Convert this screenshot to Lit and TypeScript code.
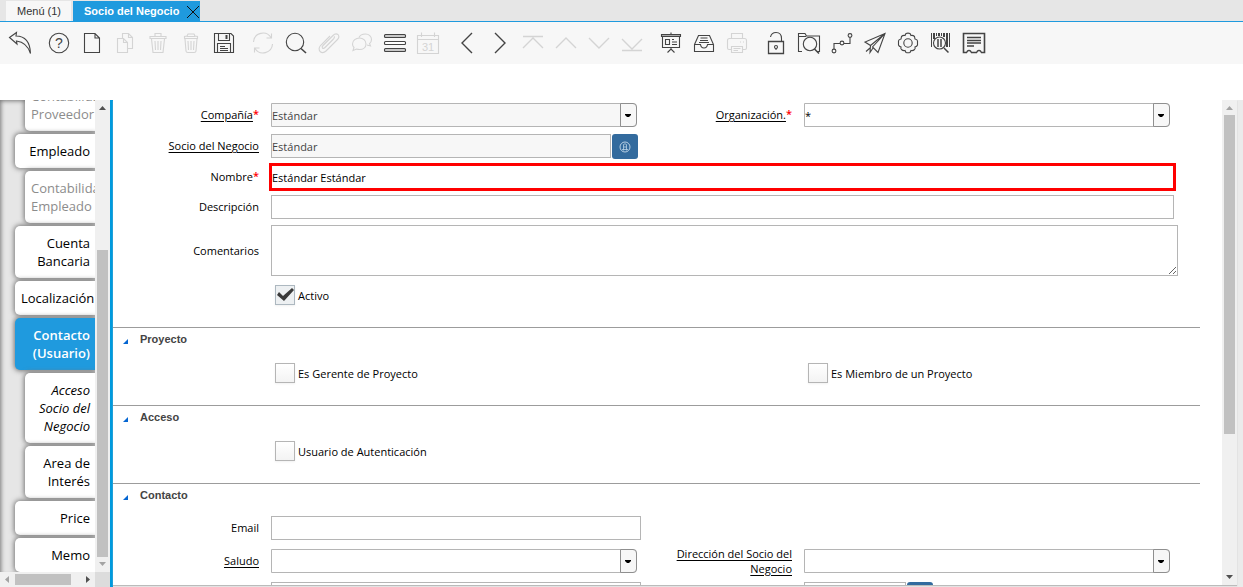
import { LitElement, html, svg, css, nothing, TemplateResult } from "lit";
import { customElement, property } from "lit/decorators.js";
import { classMap } from "lit/directives/class-map.js";

interface Tool {
  name: string;
  icon: TemplateResult;
  off?: boolean;
}

interface Tab {
  text: string;
  level?: number;
  state?: "active" | "disabled" | "readonly";
}

const toolGroups: Tool[][] = [
  [
    {
      name: "Deshacer",
      icon: svg`<path d="M1.500 6.500 8.500 1.500 8 5C16 5 22 10 22.500 22.500 20 14.500 16 11 8.500 10L9 13Z"/>`,
    },
  ],
  [
    {
      name: "Ayuda",
      icon: svg`<circle cx="12" cy="12" r="9.700"/><text x="12" y="17" font-size="14" text-anchor="middle">?</text>`,
    },
    { name: "Nuevo", icon: svg`<path d="M4.500 2.500H15L19.500 7V21.500H4.500ZM15 2.500V7H19.500"/>` },
    {
      name: "Copiar",
      off: true,
      icon: svg`<path d="M4.500 7.500H10.500L14.500 11.500V21.500H4.500ZM10.500 7.500V11.500H14.500M9.500 7.500V2.500H15.500L19.500 6.500V17.500H14.500M15.500 2.500V6.500H19.500"/>`,
    },
    {
      name: "Borrar",
      off: true,
      icon: svg`<path d="M4 5.500H20V7.500H4ZM9 5V2.500H15V5M5.500 8 7 21.500H17L18.500 8M9 10 9.500 19M12 10V19M15 10 14.500 19"/>`,
    },
    {
      name: "Borrar varios",
      off: true,
      icon: svg`<path d="M5 7.500H19M5.500 7.500V5.500L8 5 9 3H15L16 5 18.500 5.500V7.500M6 8 7 20Q7 21.500 9 21.500H15Q17 21.500 17 20L18 8M9 10 9.500 19M12 10V19M15 10 14.500 19M8 5.500H16"/>`,
    },
    {
      name: "Guardar",
      icon: svg`<path d="M2.500 2.500H19L21.500 5V21.500H2.500ZM6.500 2.500V9.500H17.500V2.500M5.500 21.500V12.500H18.500V21.500"/><path d="M14.500 4V8" stroke-width="2"/><path d="M8 15.500H13M8 17.500H16M8 19.500H16"/>`,
    },
  ],
  [
    {
      name: "Refrescar",
      off: true,
      icon: svg`<path d="M2.500 11A9.500 9.500 0 0 1 20 6.500M20.500 2.500V7H15.500M21.500 13A9.500 9.500 0 0 1 4 17.500M3.500 21.500V17H8.500"/>`,
    },
    { name: "Buscar", icon: svg`<circle cx="11" cy="11" r="8.700"/><path d="M17 17.500 22 22" stroke-width="1.600"/>` },
    {
      name: "Adjuntar",
      off: true,
      icon: svg`<path d="M16.500 8 8 16.500Q6.500 18 5.500 17 4.500 16 6 14.500L16 4.500Q18.500 2 21 3.500 23 6 20.500 8.500L9 20Q6 23 3 20.500 1 17.500 3.500 14.500L13 5"/><path d="M16.500 8Q18 6 17 5.500"/>`,
    },
    {
      name: "Conversación",
      off: true,
      icon: svg`<path d="M9.500 7C13 7 16 9.500 16 13S13 18.500 9.500 18.500Q8 18.500 6.500 18L3 19.500 4 16.500Q2.500 15 2.500 13C2.500 9.500 6 7 9.500 7Z"/><path d="M9 6.500C10 4 12.500 3 15.500 3 19 3 21.500 5.500 21.500 8.500Q21.500 11 19.500 12.500L20.500 15 17 14"/>`,
    },
    {
      name: "Vista de lista",
      icon: svg`<rect x="1.500" y="3.500" width="21" height="3" rx="1" fill="#c8c8c8"/><rect x="1.500" y="10.500" width="21" height="3" rx="1" fill="#fff"/><rect x="1.500" y="17.500" width="21" height="3" rx="1" fill="#c8c8c8"/>`,
    },
    {
      name: "Historial",
      off: true,
      icon: svg`<path d="M1.500 4.500H22.500V22.500H1.500ZM1.500 8.500H22.500M5.500 1.500V6M18.500 1.500V6"/><text x="12" y="20" font-size="11" text-anchor="middle">31</text>`,
    },
  ],
  [
    { name: "Anterior", icon: svg`<path d="M17 2 7 12 17 22" stroke-width="1.400"/>` },
    { name: "Siguiente", icon: svg`<path d="M7 2 17 12 7 22" stroke-width="1.400"/>` },
    { name: "Primer registro", off: true, icon: svg`<path d="M2 5.500H22M2 17 12 7 22 17" stroke-width="1.400"/>` },
    { name: "Registro previo", off: true, icon: svg`<path d="M2 17 12 7 22 17" stroke-width="1.400"/>` },
    { name: "Registro próximo", off: true, icon: svg`<path d="M2 7 12 17 22 7" stroke-width="1.400"/>` },
    { name: "Último registro", off: true, icon: svg`<path d="M2 8 12 18 22 8M2 19.500H22" stroke-width="1.400"/>` },
  ],
  [
    {
      name: "Informe",
      icon: svg`<path d="M2.500 3.500H21.500V5.500H2.500Z" fill="#aaa"/><path d="M3.500 5V16.500H20.500V5M6.500 8.500H10.500V13.500H6.500ZM13 8.500H15M13 11H18M13 13.500H18M12 1.500V3M12 17V19M8.500 21.500 12 18 15.500 21.500"/>`,
    },
    {
      name: "Archivo",
      icon: svg`<path d="M2.500 13.500 6.500 4.500H17.500L21.500 13.500V20.500H2.500ZM2.500 13.500H8.500Q9 17 12 17T15.500 13.500H21.500M8.500 7H15.500M8 9.500H16M7 11.500H17"/>`,
    },
    {
      name: "Imprimir",
      off: true,
      icon: svg`<path d="M6.500 7.500V2.500H17.500V7.500M6 18.500H4Q2.500 18.500 2.500 17V9.500Q2.500 7.500 4.500 7.500H19.500Q21.500 7.500 21.500 9.500V17Q21.500 18.500 20 18.500H18M6.500 15.500H17.500V21.500H6.500ZM8.500 17.500H15.500M8.500 19.500H13M15 11H16M18 11H19"/>`,
    },
  ],
  [
    {
      name: "Bloquear",
      icon: svg`<path d="M4.500 10.500H19.500V22.500H4.500Z" stroke-width="1.300"/><path d="M6.500 6Q7.500 1.500 12 1.500 17.500 1.500 17.500 7.500V10"/><circle cx="12" cy="16" r="1.500"/><path d="M12 17V19"/>`,
    },
    {
      name: "Buscar en carpeta",
      icon: svg`<path d="M5 20.500H1.500V2.500H8L9.500 5H22.500V20.500H20M1.500 5.500H9"/><circle cx="13" cy="13" r="6.700"/><path d="M17.500 18 22 22.500" stroke-width="1.500"/>`,
    },
    {
      name: "Flujo de trabajo",
      icon: svg`<circle cx="4" cy="20" r="1.900"/><circle cx="12" cy="12" r="1.900"/><circle cx="20" cy="4.500" r="1.900"/><path d="M4 18V12.500H10M14 12.500H20V6.500"/>`,
    },
    {
      name: "Enviar",
      icon: svg`<path d="M22 2.500 2 11 7.500 14.500 22 2.500 9.500 16 15 21.500ZM7.500 14.500 7 21.500 10 17M7 17 3 20.500"/>`,
    },
    {
      name: "Proceso",
      icon: svg`<path d="M10 2.500Q12 1.800 14 2.500L15 4.500Q17 4 18.500 5.500L19 8Q21.500 8.500 21.500 10V14Q21 15.500 19 16 19.500 18 18.500 18.500 17 20 15 19.500L14 21.500Q12 22 10 21.500L9 19.500Q7 20 5.500 18.500 4.500 18 5 16 3 15.500 2.500 14V10Q2.500 8.500 5 8L5.500 5.500Q7 4 9 4.500Z"/><circle cx="12" cy="12" r="4.200"/>`,
    },
    {
      name: "Código de barras",
      icon: svg`<path d="M2.500 2V16M7.500 2V5M20.500 2V16M12.500 2V5" stroke-width="1"/><path d="M5 2V8M10 2V5M15 2V6M18 2V16" stroke-width="2"/><circle cx="10.500" cy="12" r="6" fill="#f7f7f7"/><path d="M9 8V16M12 8V16" stroke-width="1.500"/><path d="M15 17 19.500 21.500" stroke-width="1.500"/>`,
    },
    {
      name: "Ticket",
      icon: svg`<path d="M5 21.500H1.500V2.500H22.500V21.500H19M9 21.500H15" stroke-width="1.600"/><path d="M5 21.500Q5 19.500 7 19.500T9 21.500M15 21.500Q15 19.500 17 19.500T19 21.500M5 6.500H19M5 9.500H19M5 12H19M5 15H12" stroke-width="1.300"/>`,
    },
  ],
];

const sideTabs: Tab[] = [
  { text: "Contabilidad Proveedor", level: 1, state: "disabled" },
  { text: "Empleado" },
  { text: "Contabilidad Empleado", level: 1, state: "disabled" },
  { text: "Cuenta Bancaria" },
  { text: "Localización" },
  { text: "Contacto (Usuario)", state: "active" },
  { text: "Acceso Socio del Negocio", level: 1, state: "readonly" },
  { text: "Area de Interés", level: 1 },
  { text: "Price" },
  { text: "Memo" },
];

/* Scroll indicator with an arrow at each end and a thumb between them. */
@customElement("scroll-rail")
class ScrollRail extends LitElement {
  @property({ type: Boolean, reflect: true }) horizontal = false;
  @property({ type: Number }) start = 0;
  @property({ type: Number }) size = 50;

  static styles = css`
    :host {
      display: flex;
      flex-direction: column;
      flex: none;
      width: 15px;
      background: #f0f0f0;
    }
    :host([horizontal]) {
      flex-direction: row;
      width: auto;
      height: 15px;
    }
    .arrow {
      flex: none;
      width: 15px;
      height: 15px;
      fill: #505050;
    }
    .dim {
      fill: #a3a3a3;
    }
    .track {
      flex: 1;
      display: flex;
      flex-direction: inherit;
      padding: 0 2px;
      min-height: 0;
    }
    :host([horizontal]) .track {
      padding: 2px 0;
    }
    .thumb {
      background: #c1c1c1;
    }
  `;

  render() {
    const h = this.horizontal;
    const rest = 100 - this.start - this.size;
    return html`
      <svg class=${classMap({ arrow: true, dim: this.start === 0 })} viewBox="0 0 15 15">
        <path d=${h ? "M9 4V11L5 7.500Z" : "M4 10H11L7.500 6Z"} />
      </svg>
      <div class="track">
        <div style="flex:${this.start}"></div>
        <div class="thumb" style="flex:${this.size}"></div>
        <div style="flex:${rest}"></div>
      </div>
      <svg class=${classMap({ arrow: true, dim: rest === 0 })} viewBox="0 0 15 15">
        <path d=${h ? "M6 4V11L10 7.500Z" : "M4 5H11L7.500 9Z"} />
      </svg>
    `;
  }
}

@customElement("app-root")
class AppRoot extends LitElement {
  static styles = css`
    :host {
      display: flex;
      flex-direction: column;
      height: 100vh;
      overflow: hidden;
      background: #fff;
      color: #000;
      font: 11px/15px "Open Sans", "Noto Sans", sans-serif;
    }
    * {
      box-sizing: border-box;
    }
    button,
    input,
    select,
    textarea {
      font: inherit;
      margin: 0;
    }

    .windows {
      flex: none;
      display: flex;
      gap: 2px;
      height: 22px;
      padding: 1px 6px 0;
      background: #e6e6e6;
      border-bottom: 1px solid #1f9ade;
      font: 11px/20px "Liberation Sans", Arial, sans-serif;
    }
    .window {
      display: flex;
      align-items: center;
      border: 0;
      padding: 0 10px 0 11px;
      background: #f7f7f7;
      color: #333;
    }
    .window.current {
      gap: 7px;
      padding: 0;
      background: #1f9ade;
      color: #fff;
      font-weight: bold;
    }
    .current .title {
      border: 0;
      background: none;
      color: inherit;
      padding: 0 0 0 11px;
    }
    .close {
      border: 0;
      background: none;
      padding: 2px 0 0;
      width: 14px;
      height: 20px;
    }
    .close svg {
      display: block;
      width: 14px;
      height: 14px;
      stroke: #111;
    }

    .toolbar {
      flex: none;
      display: flex;
      gap: 15px;
      height: 42px;
      align-items: center;
      padding: 0 8px;
      background: #f7f7f7;
    }
    .tools {
      display: flex;
      gap: 9px;
    }
    .tool {
      width: 24px;
      height: 24px;
      padding: 0;
      border: 0;
      background: none;
      color: #444;
    }
    .tool:disabled {
      color: #d4d4d4;
    }
    .tool svg {
      display: block;
      width: 24px;
      height: 24px;
      fill: none;
      stroke: currentColor;
      stroke-width: 1.1;
    }
    .tool text {
      fill: currentColor;
      stroke: none;
      font-family: "Liberation Sans", sans-serif;
    }

    .body {
      flex: 1;
      min-height: 0;
      display: flex;
      margin-top: 36px;
      background: #ebebeb;
    }
    .side {
      flex: none;
      width: 113px;
      display: grid;
      grid-template-columns: minmax(0, 1fr) 15px;
      grid-template-rows: minmax(0, 1fr) 15px;
      background: #dcdcdc;
      border-right: 3px solid #009ade;
    }
    .tabs {
      display: flex;
      flex-direction: column;
      justify-content: flex-end;
      gap: 3px;
      overflow: hidden;
      padding-left: 15px;
      background: #e6e6e6;
      box-shadow: inset 2px 2px 4px -1px #777;
    }
    .tab {
      flex: none;
      padding: 8px 5px 8px 6px;
      border: 0;
      border-radius: 5px 0 0 5px;
      background: #fff;
      box-shadow: 0 0 5px 1px #777;
      color: #000;
      font-size: 13px;
      line-height: 18px;
      text-align: right;
      text-decoration: none;
    }
    .nested {
      margin-left: 10px;
    }
    .disabled {
      color: #8c8c8c;
    }
    .readonly {
      font-style: italic;
    }
    .active {
      background: #1f9ade;
      color: #fff;
      font-weight: 600;
    }

    .panel {
      flex: 1;
      min-width: 0;
      display: flex;
      margin: 0 6px 2px 0;
      background: #fff;
      box-shadow: 0 1px 1px #bbb;
    }
    .form {
      flex: 1;
      min-width: 0;
      overflow: hidden;
      padding-right: 22px;
    }
    .group {
      display: flex;
      flex-direction: column;
      gap: 6px;
      padding: 3px 0 22px;
    }
    .row {
      display: grid;
      grid-template-columns: 146fr 370fr 139fr 374fr;
      column-gap: 12px;
      padding-right: 22px;
    }
    .row.lookup {
      height: 25px;
    }
    .wide {
      grid-column: 2 / -1;
    }
    .label {
      height: 23px;
      display: flex;
      align-items: center;
      justify-content: flex-end;
      text-align: right;
    }
    .label.tall {
      height: 51px;
    }
    .link {
      color: inherit;
      text-decoration: underline;
      text-underline-offset: 2px;
    }
    .star {
      color: #f00;
      line-height: 22px;
      align-self: flex-start;
      font-weight: 600;
    }

    .box {
      display: block;
      width: 100%;
      height: 24px;
      padding: 1px 0 0;
      border: 1px solid #b5b5b5;
      border-radius: 0;
      background: #fff;
      color: #000;
      outline: none;
    }
    .box.fixed {
      background: #f7f7f7;
      color: #444;
      opacity: 1;
    }
    .full {
      width: calc(100% - 4px);
    }
    .invalid {
      border-color: #f00;
      box-shadow: 0 0 0 2px #f00;
    }
    .memo {
      height: 51px;
      resize: both;
    }
    .combo {
      display: flex;
      position: relative;
      margin-right: 4px;
      height: 24px;
    }
    .right .combo {
      margin-right: 8px;
    }
    .combo select {
      appearance: none;
      border-radius: 0 4px 4px 0;
    }
    .drop {
      position: absolute;
      right: 0;
      top: 0;
      width: 17px;
      height: 24px;
      border: 1px solid #8f8f8f;
      border-radius: 0 4px 4px 0;
      background: #f7f7f7;
      pointer-events: none;
    }
    .search {
      display: flex;
      gap: 1px;
      padding-right: 3px;
    }
    .search.short {
      padding-right: 245px;
    }
    .pick {
      flex: none;
      width: 26px;
      height: 25px;
      padding: 0;
      border: 0;
      border-radius: 3px;
      background: #336b9e;
    }
    .pick svg {
      display: block;
      width: 12px;
      height: 12px;
      margin: 0 auto;
      fill: none;
      stroke: #b8d0e4;
    }
    .check {
      display: flex;
      align-items: center;
      gap: 3px;
      padding: 3px 0 0 4px;
    }
    .check label {
      padding-top: 1px;
    }
    .check input {
      appearance: none;
      width: 20px;
      height: 20px;
      padding: 2px 1px;
      border: 1px solid #b5b5b5;
      background: linear-gradient(#fff, #f3f3f3);
      box-shadow: 0 1px 2px rgba(0, 0, 0, 0.06);
    }
    .check input:checked {
      border-color: #adb8c0;
      background: #edf0f2;
    }
    .check input:checked::after {
      content: "";
      display: block;
      width: 17px;
      height: 13px;
      background: #3a3a3a;
      clip-path: polygon(0 7px, 2px 4px, 6px 8px, 15px 0, 17px 2px, 7px 13px);
    }

    .section {
      border-top: 1px solid #9c9c9c;
    }
    .heading {
      display: flex;
      align-items: center;
      gap: 12px;
      height: 23px;
      width: 100%;
      margin: 0 0 6px;
      padding: 0 0 0 10px;
      border: 0;
      background: none;
      color: #444;
      font: bold 11px/15px "Liberation Sans", Arial, sans-serif;
      text-align: left;
    }
    .heading svg {
      width: 5px;
      height: 5px;
      margin-top: 4px;
      fill: #0566d2;
    }
    .loose {
      gap: 9px;
    }
  `;

  private tool(t: Tool) {
    return html`<button class="tool" aria-label=${t.name} ?disabled=${t.off}>
      <svg viewBox="0 0 24 24">${t.icon}</svg>
    </button>`;
  }

  private tab(t: Tab) {
    return html`<a
      href="#"
      class=${classMap({
        tab: true,
        nested: t.level === 1,
        active: t.state === "active",
        disabled: t.state === "disabled",
        readonly: t.state === "readonly",
      })}
      >${t.text}</a
    >`;
  }

  private label(id: string, text: string, link = false, required = false, tall = false) {
    return html`<label class=${classMap({ label: true, tall })} for=${id}
      ><span class=${link ? "link" : nothing}>${text}</span>${required ? html`<span class="star">*</span>` : nothing}</label
    >`;
  }

  private combo(id: string, value: string, fixed = false) {
    return html`<div class="combo">
      <select id=${id} class=${classMap({ box: true, fixed })} ?disabled=${fixed}>
        <option>${value}</option>
      </select>
      <svg class="drop" viewBox="0 0 15 22"><path d="M4 10H10V11L8 13H6L4 11Z" /></svg>
    </div>`;
  }

  private pick(name: string) {
    return html`<button class="pick" aria-label=${name}>
      <svg viewBox="0 0 12 12">
        <circle cx="6" cy="6" r="5" />
        <path d="M4.500 9.500V3.500Q6 2 7.500 3.500V9.500M3 8.500H9M4.500 6H7.500" stroke-width="0.800" />
      </svg>
    </button>`;
  }

  private check(id: string, text: string, checked = false) {
    return html`<div class="check"><input id=${id} type="checkbox" ?checked=${checked} /><label for=${id}>${text}</label></div>`;
  }

  private section(title: string, rows: TemplateResult, loose = false) {
    return html`<section class="section">
      <button class="heading">
        <svg viewBox="0 0 5 5"><path d="M5 0V5H0Z" /></svg><span>${title}</span>
      </button>
      <div class=${classMap({ group: true, loose })}>${rows}</div>
    </section>`;
  }

  render() {
    return html`
      <nav class="windows">
        <button class="window">Menú (1)</button>
        <div class="window current">
          <button class="title">Socio del Negocio</button>
          <button class="close" aria-label="Cerrar">
            <svg viewBox="0 0 14 14"><path d="M1 1 13 13M13 1 1 13" /></svg>
          </button>
        </div>
      </nav>
      <div class="toolbar">${toolGroups.map((g) => html`<div class="tools">${g.map((t) => this.tool(t))}</div>`)}</div>
      <div class="body">
        <aside class="side">
          <nav class="tabs">${sideTabs.map((t) => this.tab(t))}</nav>
          <scroll-rail .start=${30.5} .size=${69.5}></scroll-rail>
          <scroll-rail horizontal .start=${0} .size=${86}></scroll-rail>
        </aside>
        <main class="panel">
          <div class="form">
            <div class="group">
              <div class="row lookup">
                ${this.label("company", "Compañía", true, true)} ${this.combo("company", "Estándar", true)}
                ${this.label("org", "Organización.", true, true)}
                <div class="right">${this.combo("org", "*")}</div>
              </div>
              <div class="row lookup">
                ${this.label("partner", "Socio del Negocio", true)}
                <div class="search">
                  <input id="partner" class="box fixed" value="Estándar" readonly />${this.pick("Buscar socio")}
                </div>
              </div>
              <div class="row">
                ${this.label("name", "Nombre", false, true)}
                <div class="wide"><input id="name" class="box full invalid" value="Estándar Estándar" /></div>
              </div>
              <div class="row">
                ${this.label("desc", "Descripción")}
                <div class="wide"><input id="desc" class="box full" /></div>
              </div>
              <div class="row">
                ${this.label("notes", "Comentarios", false, false, true)}
                <div class="wide"><textarea id="notes" class="box memo"></textarea></div>
              </div>
              <div class="row">
                <span></span>
                ${this.check("isactive", "Activo", true)}
              </div>
            </div>
            ${this.section(
              "Proyecto",
              html`<div class="row">
                <span></span>${this.check("manager", "Es Gerente de Proyecto")}<span></span>${this.check(
                  "member",
                  "Es Miembro de un Proyecto"
                )}
              </div>`
            )}
            ${this.section("Acceso", html`<div class="row"><span></span>${this.check("auth", "Usuario de Autenticación")}</div>`)}
            ${this.section(
              "Contacto",
              html`<div class="row">
                  ${this.label("email", "Email")}
                  <div><input id="email" class="box" type="email" /></div>
                </div>
                <div class="row">
                  ${this.label("greeting", "Saludo", true)} ${this.combo("greeting", "")}
                  ${this.label("address", "Dirección del Socio del Negocio", true)}
                  <div class="right">${this.combo("address", "")}</div>
                </div>
                <div class="row">
                  <span></span>
                  <div><input class="box" aria-label="Título" /></div>
                  <span></span>
                  <div class="search short"><input class="box" aria-label="Cumpleaños" />${this.pick("Calendario")}</div>
                </div>`,
              true
            )}
          </div>
          <scroll-rail .start=${0} .size=${70}></scroll-rail>
        </main>
      </div>
    `;
  }
}
